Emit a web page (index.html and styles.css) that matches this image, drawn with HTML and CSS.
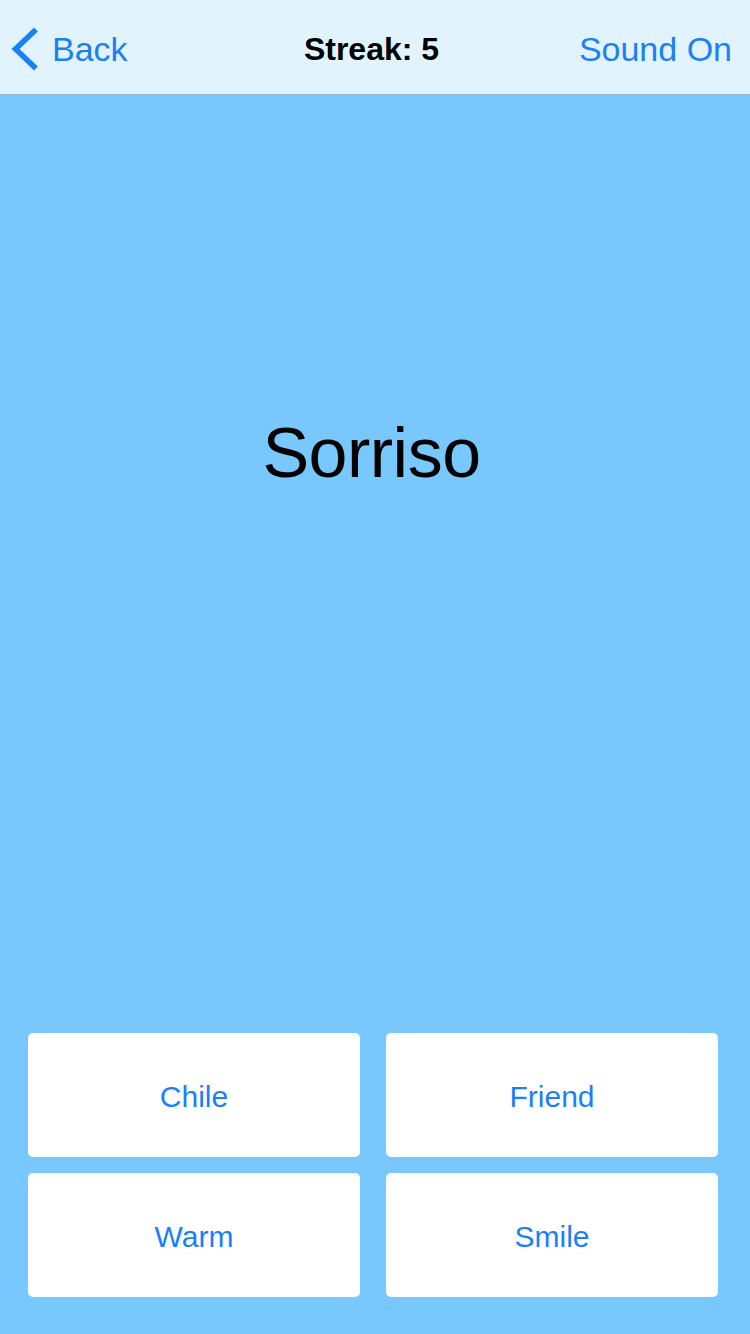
FILE: index.html
```html
<!DOCTYPE html>
<html>
<head>
<meta charset="utf-8">
<link rel="stylesheet" href="styles.css">
</head>
<body>
<div class="app">
  <header class="nav">
    <div class="nav-left">
      <svg class="chev" width="28" height="46" viewBox="0 0 28 46"><polyline points="25,4.5 4.5,24 25,43.5" fill="none" stroke="#1a7ffb" stroke-width="5.5" stroke-linecap="butt" stroke-linejoin="miter"/></svg>
      <span class="nav-link">Back</span>
    </div>
    <div class="nav-title">Streak: 5</div>
    <div class="nav-right"><span class="nav-link">Sound On</span></div>
  </header>
  <main class="main">
    <div class="word">Sorriso</div>
    <div class="spacer"></div>
    <div class="answers">
      <div class="answer">Chile</div>
      <div class="answer">Friend</div>
      <div class="answer">Warm</div>
      <div class="answer">Smile</div>
    </div>
  </main>
</div>
</body>
</html>
```
FILE: styles.css
```css
html, body {
  margin: 0;
  padding: 0;
}
body {
  width: 750px;
  height: 1334px;
  font-family: "Liberation Sans", Arial, sans-serif;
  background: #78c8fe;
}
.app {
  display: flex;
  flex-direction: column;
  height: 1334px;
}
.nav {
  height: 95px;
  box-sizing: border-box;
  border-bottom: 1px solid #9fb9c9;
  background: #e1f3fd;
  display: flex;
  align-items: center;
  padding-top: 4px;
}
.nav-left {
  display: flex;
  align-items: center;
  padding-left: 11px;
  flex: 1;
}
.chev {
  margin-right: 13px;
  margin-top: -2px;
}
.nav-link {
  font-size: 34px;
  color: #1a7ffb;
}
.nav-title {
  font-size: 32px;
  font-weight: bold;
  color: #000;
}
.nav-right {
  flex: 1;
  display: flex;
  justify-content: flex-end;
  padding-right: 18px;
}
.main {
  flex: 1;
  display: flex;
  flex-direction: column;
}
.word {
  margin-top: 318px;
  padding-right: 7px;
  font-size: 70px;
  letter-spacing: -0.5px;
  line-height: 80px;
  text-align: center;
  color: #000;
}
.spacer {
  flex: 1;
}
.answers {
  display: grid;
  grid-template-columns: 332px 332px;
  grid-auto-rows: 124px;
  column-gap: 26px;
  row-gap: 16px;
  padding: 0 32px 37px 28px;
}
.answer {
  background: #fff;
  border-radius: 5px;
  display: flex;
  align-items: center;
  justify-content: center;
  padding-top: 3px;
  box-sizing: border-box;
  font-size: 30px;
  color: #1a7ffb;
}
```
